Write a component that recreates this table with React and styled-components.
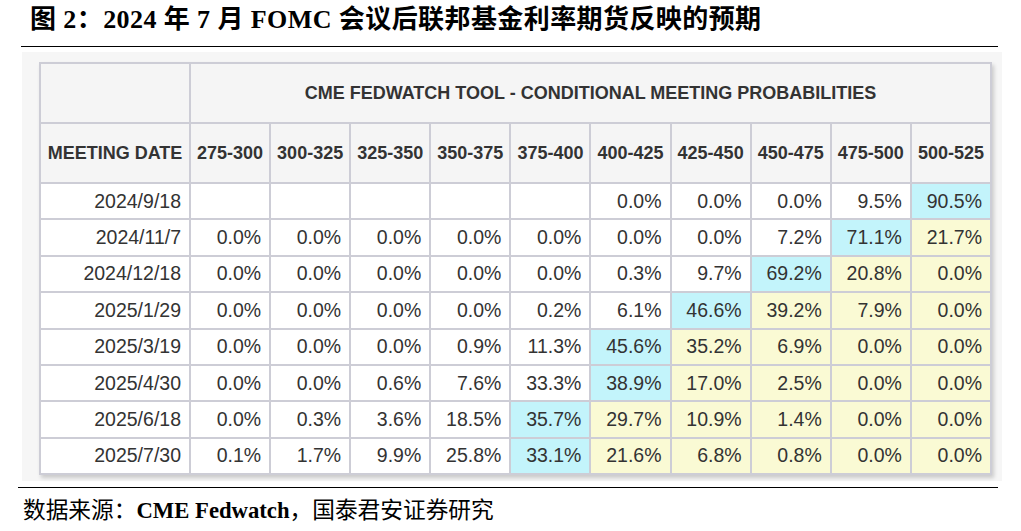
import React from "react";
import styled, { createGlobalStyle } from "styled-components";

const GlobalStyle = createGlobalStyle`
  html, body {
    margin: 0;
    padding: 0;
    background: #fff;
  }
`;

const Figure = styled.div`
  width: 977px;
  margin-left: 21px;
  font-family: "Liberation Serif", "Noto Sans CJK SC", serif;
  color: #000;
`;

const Title = styled.div`
  height: 46px;
  padding-left: 9px;
  line-height: 40px;
  font-size: 26px;
  font-weight: 700;
  letter-spacing: 0.42px;
  white-space: nowrap;
  border-bottom: 1.5px solid #000;
`;

const Panel = styled.div`
  width: 980px;
  margin: 5px 0 0 1px;
  padding: 10px 9px 6px 17px;
  box-sizing: border-box;
  background: #f6f6f6;
`;

const Table = styled.table`
  width: 953px;
  border-collapse: collapse;
  table-layout: fixed;
  background: #fff;
  box-shadow: 2px 3px 4px rgba(0, 0, 0, 0.18);
  font-family: "Liberation Sans", Arial, sans-serif;
  color: #333;
`;

const HeadCell = styled.th`
  height: 58px;
  padding: 0;
  border: 2px solid #cdcdd6;
  background: #f5f5f5;
  font-size: 18px;
  font-weight: 700;
  text-align: center;
  white-space: nowrap;
`;

const Cell = styled.td`
  height: 34.4px;
  padding: 0 8px 0 0;
  border: 2px solid #cdcdd6;
  background: ${({ $tone }) =>
    $tone === "max" ? "#c3f4fb" : $tone === "above" ? "#fafad4" : "#fff"};
  font-size: 19.5px;
  text-align: right;
  white-space: nowrap;
`;

const Rule = styled.div`
  width: 980px;
  margin: 6px 0 0 -3px;
  border-top: 1.5px solid #000;
`;

const Source = styled.div`
  margin-left: 2px;
  padding-top: 8px;
  line-height: 30px;
  font-size: 22.7px;
  white-space: nowrap;
`;

const ranges = [
  "275-300", "300-325", "325-350", "350-375", "375-400",
  "400-425", "425-450", "450-475", "475-500", "500-525",
];

// max: the most likely range for the meeting, cells to its right are shaded yellow
const rows = [
  { date: "2024/9/18", max: 9, values: [null, null, null, null, null, 0.0, 0.0, 0.0, 9.5, 90.5] },
  { date: "2024/11/7", max: 8, values: [0.0, 0.0, 0.0, 0.0, 0.0, 0.0, 0.0, 7.2, 71.1, 21.7] },
  { date: "2024/12/18", max: 7, values: [0.0, 0.0, 0.0, 0.0, 0.0, 0.3, 9.7, 69.2, 20.8, 0.0] },
  { date: "2025/1/29", max: 6, values: [0.0, 0.0, 0.0, 0.0, 0.2, 6.1, 46.6, 39.2, 7.9, 0.0] },
  { date: "2025/3/19", max: 5, values: [0.0, 0.0, 0.0, 0.9, 11.3, 45.6, 35.2, 6.9, 0.0, 0.0] },
  { date: "2025/4/30", max: 5, values: [0.0, 0.0, 0.6, 7.6, 33.3, 38.9, 17.0, 2.5, 0.0, 0.0] },
  { date: "2025/6/18", max: 4, values: [0.0, 0.3, 3.6, 18.5, 35.7, 29.7, 10.9, 1.4, 0.0, 0.0] },
  { date: "2025/7/30", max: 4, values: [0.1, 1.7, 9.9, 25.8, 33.1, 21.6, 6.8, 0.8, 0.0, 0.0] },
];

const toneFor = (i, max) => (i === max ? "max" : i > max ? "above" : "none");

const App = () => {
  return (
    <>
      <GlobalStyle />
      <Figure>
        <Title>图 2：2024 年 7 月 FOMC 会议后联邦基金利率期货反映的预期</Title>
        <Panel>
          <Table>
            <colgroup>
              <col style={{ width: 150 }} />
              {ranges.map((r) => (
                <col key={r} />
              ))}
            </colgroup>
            <thead>
              <tr>
                <HeadCell />
                <HeadCell colSpan={10}>
                  CME FEDWATCH TOOL - CONDITIONAL MEETING PROBABILITIES
                </HeadCell>
              </tr>
              <tr>
                <HeadCell>MEETING DATE</HeadCell>
                {ranges.map((r) => (
                  <HeadCell key={r}>{r}</HeadCell>
                ))}
              </tr>
            </thead>
            <tbody>
              {rows.map((row) => (
                <tr key={row.date}>
                  <Cell>{row.date}</Cell>
                  {row.values.map((v, i) => (
                    <Cell key={i} $tone={v === null ? "none" : toneFor(i, row.max)}>
                      {v === null ? "" : `${v.toFixed(1)}%`}
                    </Cell>
                  ))}
                </tr>
              ))}
            </tbody>
          </Table>
        </Panel>
        <Rule />
        <Source>
          数据来源：<b>CME Fedwatch</b>，国泰君安证券研究
        </Source>
      </Figure>
    </>
  );
};

export default App;
